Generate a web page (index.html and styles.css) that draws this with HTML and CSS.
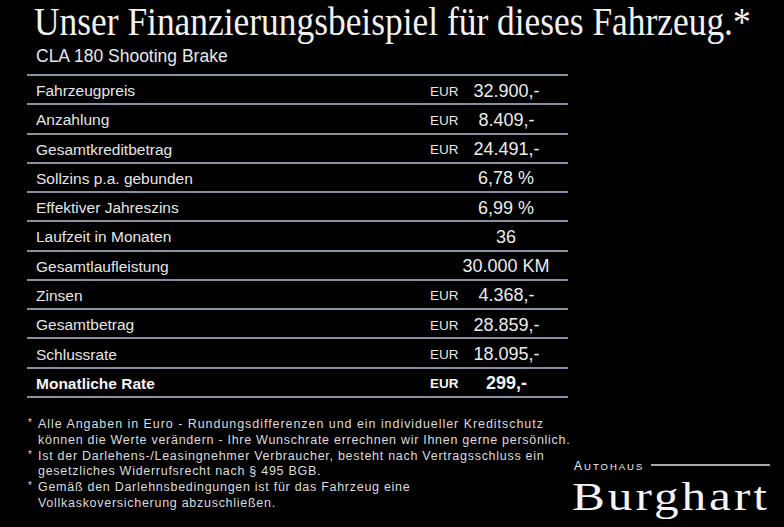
FILE: index.html
```html
<!DOCTYPE html>
<html lang="de">
<head>
<meta charset="utf-8">
<title>Finanzierungsbeispiel</title>
<link rel="stylesheet" href="styles.css">
</head>
<body>
<div class="page">
  <h1 class="title">Unser Finanzierungsbeispiel für dieses Fahrzeug.*</h1>
  <div class="model">CLA 180 Shooting Brake</div>
  <div class="table">
    <div class="row"><span class="label">Fahrzeugpreis</span><span class="cur">EUR</span><span class="val">32.900,-</span></div>
    <div class="row"><span class="label">Anzahlung</span><span class="cur">EUR</span><span class="val">8.409,-</span></div>
    <div class="row"><span class="label">Gesamtkreditbetrag</span><span class="cur">EUR</span><span class="val">24.491,-</span></div>
    <div class="row"><span class="label">Sollzins p.a. gebunden</span><span class="cur"></span><span class="val">6,78 %</span></div>
    <div class="row"><span class="label">Effektiver Jahreszins</span><span class="cur"></span><span class="val">6,99 %</span></div>
    <div class="row"><span class="label">Laufzeit in Monaten</span><span class="cur"></span><span class="val">36</span></div>
    <div class="row"><span class="label">Gesamtlaufleistung</span><span class="cur"></span><span class="val">30.000 KM</span></div>
    <div class="row"><span class="label">Zinsen</span><span class="cur">EUR</span><span class="val">4.368,-</span></div>
    <div class="row"><span class="label">Gesamtbetrag</span><span class="cur">EUR</span><span class="val">28.859,-</span></div>
    <div class="row"><span class="label">Schlussrate</span><span class="cur">EUR</span><span class="val">18.095,-</span></div>
    <div class="row row-strong"><span class="label">Monatliche Rate</span><span class="cur">EUR</span><span class="val">299,-</span></div>
  </div>
  <div class="bottom">
    <div class="notes">
      <div class="note"><span class="star">*</span><span class="ntext"><span class="wide">Alle Angaben in Euro - Rundungsdifferenzen und ein individueller Kreditschutz</span><br>können die Werte verändern - Ihre Wunschrate errechnen wir Ihnen gerne persönlich.</span></div>
      <div class="note"><span class="star">*</span><span class="ntext">Ist der Darlehens-/Leasingnehmer Verbraucher, besteht nach Vertragsschluss ein<br>gesetzliches Widerrufsrecht nach § 495 BGB.</span></div>
      <div class="note"><span class="star">*</span><span class="ntext">Gemäß den Darlehnsbedingungen ist für das Fahrzeug eine<br>Vollkaskoversicherung abzuschließen.</span></div>
    </div>
    <div class="logo">
      <div class="logo-top"><span class="logo-small"><span class="logo-a">A</span>UTOHAUS</span><span class="logo-rule"></span></div>
      <div class="logo-name"><span class="logo-name-text">Burghart</span></div>
    </div>
  </div>
</div>
</body>
</html>
```
FILE: styles.css
```css
html, body {
  margin: 0;
  padding: 0;
  background: #000;
}
body {
  width: 784px;
  height: 527px;
  overflow: hidden;
  color: #e6e6e6;
  font-family: "Liberation Sans", Arial, sans-serif;
}
.page {
  display: flex;
  flex-direction: column;
}
.title {
  margin: 0;
  padding-left: 34px;
  font-family: "Liberation Serif", "Times New Roman", serif;
  font-weight: normal;
  font-size: 40px;
  line-height: 44.3px;
  height: 44px;
  color: #f2f2f2;
  white-space: nowrap;
  transform: scaleX(0.885);
  transform-origin: 34px 0;
}
.model {
  margin-top: 2px;
  padding-left: 36px;
  font-size: 17.5px;
  line-height: 20px;
  color: #e8e8e8;
}
.table {
  margin-top: 8px;
  margin-left: 27px;
  width: 541px;
  border-top: 2px solid #8791a3;
}
.row {
  display: flex;
  align-items: center;
  box-sizing: border-box;
  height: 29.27px;
  padding-top: 3px;
  padding-left: 9px;
  border-bottom: 2px solid #8791a3;
  white-space: nowrap;
}
.label {
  flex: 0 0 394px;
  font-size: 15.5px;
  color: #e6e6e6;
}
.cur {
  flex: 0 0 28px;
  font-size: 13.5px;
  color: #e6e6e6;
}
.val {
  flex: 0 0 96px;
  text-align: center;
  font-size: 18px;
  color: #ececec;
}
.row-strong .label,
.row-strong .cur,
.row-strong .val {
  font-weight: bold;
  color: #f4f4f4;
}
.bottom {
  display: flex;
  margin-top: 19px;
}
.notes {
  margin-left: 28px;
  width: 546px;
}
.note {
  display: flex;
  font-size: 12.5px;
  line-height: 15.8px;
  letter-spacing: 0.72px;
  color: #dcdcdc;
  white-space: nowrap;
}
.wide {
  letter-spacing: 0.95px;
}
.star {
  flex: 0 0 10px;
  font-size: 10px;
  line-height: 12px;
  letter-spacing: 0;
}
.logo {
  width: 196px;
  margin-top: 43.8px;
}
.logo-top {
  display: flex;
  align-items: center;
  height: 12px;
  line-height: 12px;
}
.logo-small {
  font-size: 9.5px;
  letter-spacing: 2px;
  color: #f0f0f0;
}
.logo-a {
  font-size: 12px;
}
.logo-rule {
  flex: 1;
  height: 1.5px;
  margin-left: 7px;
  margin-top: -3px;
  background: #a9a9a9;
}
.logo-name {
  margin-top: 2.9px;
  margin-left: -2px;
  font-family: "Liberation Serif", "Times New Roman", serif;
  font-size: 41px;
  line-height: 41px;
  color: #f4f4f4;
  white-space: nowrap;
}
.logo-name-text {
  display: inline-block;
  letter-spacing: 2.5px;
  transform: scaleX(1.2);
  transform-origin: 0 0;
}
```
